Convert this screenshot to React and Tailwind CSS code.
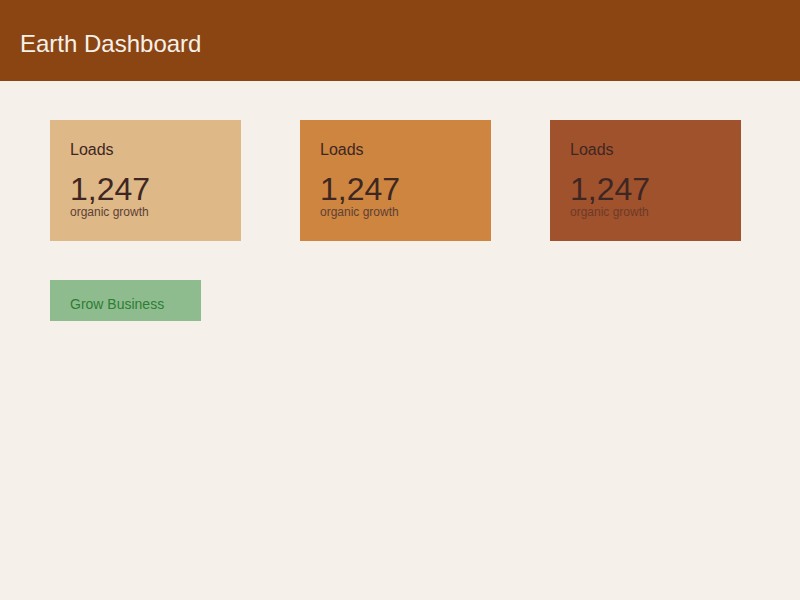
export default function App() {
  const cards = [
    { bg: 'bg-[#deb887]', sub: 'text-[#5d4037]' },
    { bg: 'bg-[#cd853f]', sub: 'text-[#5d4037]' },
    { bg: 'bg-[#a0522d]', sub: 'text-[#6d3a28]' },
  ];

  return (
    <div className="min-h-[600px] bg-[#f5f1ea] font-['Liberation_Sans',Arial,sans-serif]">
      <header className="h-[81px] bg-[#8b4513] px-5 pt-[30px]">
        <h1 className="text-2xl leading-[28px] text-[#f5f1ea]">Earth Dashboard</h1>
      </header>

      <main className="px-[50px] pt-[39px]">
        <div className="flex gap-[59px]">
          {cards.map((c, i) => (
            <div key={i} className={`w-[191px] h-[121px] px-5 pt-[21px] text-[#3e2723] ${c.bg}`}>
              <div className="text-base leading-[18px]">Loads</div>
              <div className="mt-[14px] text-[32px] leading-[32px]">1,247</div>
              <div className={`text-xs leading-[14px] ${c.sub}`}>organic growth</div>
            </div>
          ))}
        </div>

        <button className="mt-[39px] h-[41px] w-[151px] bg-[#8fbc8f] px-5 pt-[6px] text-left text-sm text-[#2e7d32]">
          Grow Business
        </button>
      </main>
    </div>
  );
}
